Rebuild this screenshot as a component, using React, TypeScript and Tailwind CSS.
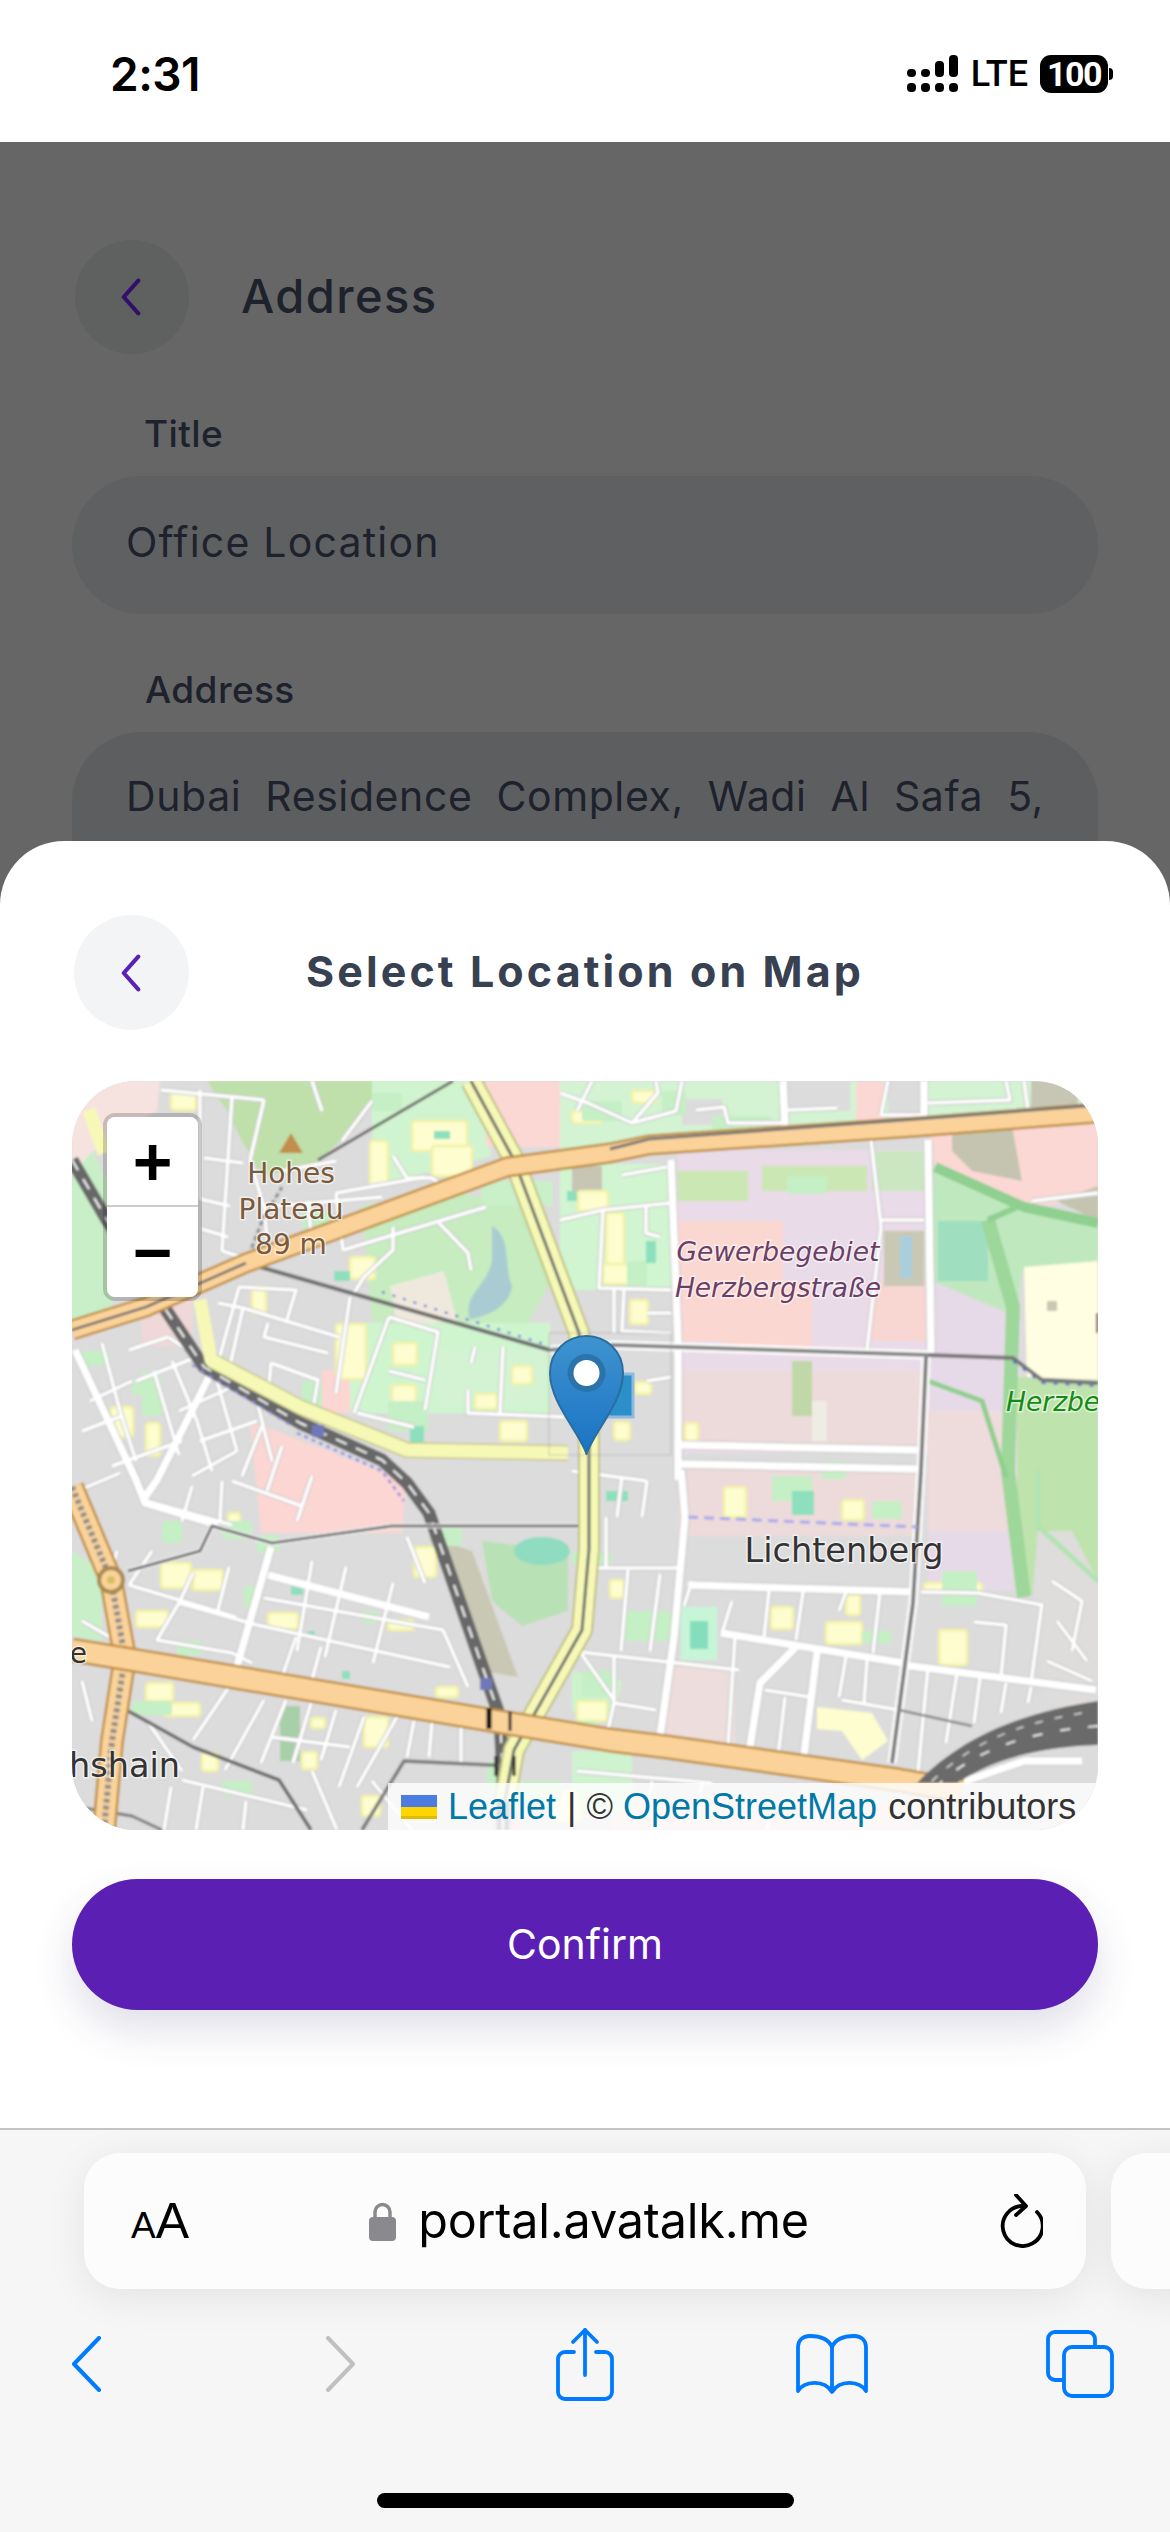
const sans = "font-['Inter','Noto_Sans',sans-serif]";

const thin = [
  "89,9 192,19", "128,9 128,118", "160,16 150,170", "192,19 178,79", "132,77 171,82", "128,118 158,125", "130,148 156,156", "150,170 176,178",
  "167,206 224,209 214,242", "146,222 171,227 157,289", "171,227 267,256", "196,242 192,256 256,272", "199,282 246,299 242,322", "199,282 196,316",
  "317,236 366,251 353,329", "317,236 282,332", "285,332 342,346", "317,290 353,299", "278,216 264,312", "396,309 396,332 492,336", "431,266 428,332", "403,266 399,282",
  "264,112 353,96", "192,126 310,116", "271,169 414,126", "367,142 396,172 399,189", "321,146 321,169 292,196 282,212", "321,75 335,97 360,97 367,102",
  "192,126 196,168", "236,120 240,165", "264,112 271,169", "178,79 192,126", "210,90 264,80", "270,60 300,20", "240,0 250,30",
  "57,269 96,256", "96,256 142,286", "167,206 146,282", "82,290 107,374", "64,300 140,270", "107,330 160,306", "18,320 60,300", "10,350 50,335", "128,360 185,340", "180,300 200,380",
  "40,385 110,360", "5,410 48,392", "71,419 160,444", "107,522 85,559 160,572 180,582", "121,492 107,522", "57,504 164,536", "157,486 146,529",
  "30,262 48,330 64,380", "100,280 125,340", "125,340 140,390", "145,300 165,370", "165,370 120,395", "190,345 170,395", "210,365 195,410", "160,400 230,425", "120,405 110,440", "240,395 225,440", "150,400 148,440",
  "192,517 371,549", "185,544 378,586", "107,522 185,544", "274,486 253,576", "321,502 301,582", "224,556 210,596", "249,566 239,602", "371,549 396,606", "335,456 353,502", "240,480 225,570",
  "157,606 121,659", "192,619 153,689", "214,619 189,682", "239,622 221,682", "264,629 249,679", "292,636 267,706", "325,636 285,706", "342,640 335,676", "360,640 357,676", "389,646 389,682",
  "199,656 278,666", "110,699 235,729", "99,706 92,749", "131,706 124,749", "174,720 171,749", "45,470 40,490", "10,540 45,560", "10,600 20,640", "57,504 80,470", "75,640 110,690", "300,700 340,749", "240,690 265,749",
  "534,436 534,486", "509,487 609,487", "508,571 667,589", "556,489 549,570", "588,493 578,570", "697,510 692,556", "731,511 724,559", "774,511 767,530", "808,511 801,572",
  "663,556 656,666", "713,616 706,676", "774,576 767,616", "795,579 792,622", "770,619 827,629", "693,609 738,616", "856,586 845,702", "885,592 874,662", "908,597 902,642", "934,602 929,632", "959,606 956,622",
  "902,541 934,544 929,596", "970,522 959,602", "906,512 970,524", "849,511 906,512", "542,622 536,649", "542,622 584,629", "508,571 542,619", "542,576 542,622",
  "531,129 527,207 599,209", "488,139 531,129 599,122", "550,94 595,86", "574,126 574,152 588,156", "542,209 542,252", "552,209 550,250 599,252", "799,59 809,146 795,269", "809,139 852,139",
  "809,34 816,0", "809,34 852,34", "856,22 938,19 934,0", "952,0 956,29", "716,29 765,27", "716,42 656,42 652,26 624,29", "560,42 586,12 584,0", "488,12 516,22 560,42", "520,0 505,30",
  "610,0 604,30 560,42", "960,120 1026,112", "575,232 599,232", "575,300 599,296", "500,390 575,400", "550,395 545,436", "575,400 570,436", "660,520 650,552", "620,500 612,525",
  "505,690 560,695 640,702", "580,700 575,735", "630,702 625,740", "700,720 695,749", "980,500 1010,520 1000,570", "985,540 1015,580", "975,580 1020,600",
];

const mid = [
  "3,269 64,399 73,422 146,444", "142,286 85,399 71,419", "199,466 164,589", "196,494 357,536", "649,552 831,582", "724,566 688,602 677,672", "745,571 731,682",
  "711,0 713,46", "852,0 852,39", "856,59 859,272", "599,79 606,260 606,399", "609,389 613,436 602,556 588,656", "616,504 845,511", "609,364 845,369", "609,383 845,388", "831,584 1024,609", "888,702 952,680 1010,680",
];

const yellow = [
  [99, 12, 25, 17], [340, 40, 55, 30], [360, 65, 40, 30], [298, 60, 18, 45], [278, 176, 25, 22], [180, 205, 14, 28], [264, 243, 30, 55], [321, 262, 24, 22], [320, 304, 24, 20],
  [440, 285, 20, 18], [403, 313, 22, 15], [428, 340, 27, 20], [506, 110, 30, 20], [534, 132, 18, 55], [531, 183, 36, 20], [558, 219, 18, 24], [563, 301, 16, 12], [542, 341, 16, 18],
  [613, 342, 13, 18], [89, 482, 30, 25], [121, 489, 30, 20], [196, 532, 30, 16], [74, 602, 27, 18], [92, 622, 36, 13], [64, 530, 32, 16], [292, 636, 24, 30], [230, 671, 15, 17],
  [364, 606, 22, 10], [316, 539, 26, 10], [239, 637, 14, 10], [156, 432, 12, 10], [342, 466, 22, 30], [699, 526, 22, 22], [754, 541, 36, 22], [774, 514, 14, 20], [652, 406, 22, 30],
  [770, 419, 22, 20], [867, 549, 28, 35], [538, 499, 14, 18], [852, 502, 58, 8], [39, 326, 22, 30], [74, 342, 14, 33], [488, 300, 10, 20], [505, 620, 30, 20], [500, 30, 30, 12],
  [560, 10, 24, 12], [290, 715, 18, 20], [480, 710, 28, 30], [130, 672, 16, 18],
];

const green = [
  [316, 320, 40, 30], [90, 440, 20, 22], [70, 290, 20, 45], [185, 454, 22, 18], [172, 505, 14, 22], [290, 530, 16, 12], [360, 445, 30, 20], [150, 700, 30, 14], [60, 620, 40, 14],
  [415, 680, 20, 30], [510, 20, 40, 20], [590, 10, 24, 24], [640, 35, 60, 24], [500, 470, 40, 14], [550, 530, 50, 30], [510, 590, 35, 25], [495, 640, 30, 20], [440, 700, 50, 20],
  [750, 380, 24, 18], [800, 420, 30, 18], [700, 395, 40, 25], [870, 490, 35, 35], [790, 550, 30, 12], [715, 95, 40, 18], [300, 12, 30, 18], [8, 270, 30, 15], [416, 25, 10, 14],
  [230, 300, 20, 25], [60, 300, 14, 14], [150, 440, 30, 18], [230, 130, 30, 18], [105, 560, 25, 14], [555, 180, 20, 25],
];

const teal = [
  [362, 50, 16, 8], [262, 190, 16, 10], [219, 500, 12, 14], [235, 550, 8, 8], [270, 590, 8, 8], [534, 410, 22, 10], [720, 410, 22, 24], [574, 160, 10, 22], [495, 110, 10, 10], [338, 345, 14, 20],
];

function MapArt() {
  return (
    <svg viewBox="0 0 1026 749" className="absolute inset-0 w-full h-full">
      <defs>
        <filter id="soft" x="0" y="0" width="100%" height="100%">
          <feGaussianBlur stdDeviation="0.8" />
        </filter>
      </defs>
      <g filter="url(#soft)">
        <rect width="1026" height="749" fill="#dddcdc" />
        {/* land use */}
        <polygon points="0,0 88,0 85,30 30,60 0,100" fill="#f6e3e0" />
        <polygon points="0,95 20,70 40,110 40,232 0,240" fill="#c9efc9" />
        <polygon points="135,0 307,0 290,40 240,85 190,95 170,60 155,30" fill="#bfe0aa" />
        <polygon points="290,125 370,110 470,125 478,200 455,245 400,255 300,240" fill="#c6ecc0" />
        <polygon points="318,205 372,190 385,240 325,245" fill="#efe9dd" />
        <path d="M420 145 C440 155 432 190 440 205 C438 225 415 236 398 238 C390 215 415 205 420 180 Z" fill="#a9ccd2" />
        <rect x="300" y="0" width="110" height="60" fill="#d0f4cf" />
        <polygon points="300,60 410,40 420,75 300,105" fill="#d0f4cf" />
        <rect x="414" y="0" width="82" height="66" fill="#fbd8d4" />
        <polygon points="488,0 1026,0 1026,30 845,45 577,60 488,75" fill="#d3f3d3" />
        <rect x="610" y="18" width="40" height="26" fill="#dcdcdc" />
        <rect x="716" y="0" width="62" height="30" fill="#dcdcdc" />
        <rect x="784" y="0" width="28" height="42" fill="#fbd8d4" />
        <rect x="816" y="0" width="34" height="34" fill="#dcdcdc" />
        <rect x="959" y="0" width="47" height="26" fill="#c7c6b4" />
        <polygon points="178,340 335,400 330,452 189,452" fill="#fbd6d2" />
        <rect x="250" y="289" width="35" height="43" fill="#fbd6d2" />
        <rect x="278" y="242" width="200" height="90" fill="#cff5cf" />
        <rect x="364" y="270" width="110" height="55" fill="#d3f3d3" />
        <rect x="70" y="215" width="50" height="50" fill="#f0d8d8" />
        <rect x="410" y="100" width="70" height="25" fill="#c9f0c9" />
        <rect x="488" y="83" width="111" height="126" fill="#d0f5d0" />
        <rect x="500" y="85" width="30" height="25" fill="#c7c6b4" />
        <rect x="606" y="69" width="254" height="303" fill="#e9dbe8" />
        <rect x="606" y="140" width="105" height="120" fill="#fbd7d2" />
        <rect x="650" y="200" width="90" height="70" fill="#fbd7d2" />
        <rect x="606" y="90" width="70" height="30" fill="#cbe7b3" />
        <rect x="690" y="85" width="105" height="25" fill="#cbe7b3" />
        <rect x="800" y="200" width="55" height="60" fill="#f8d6d2" />
        <rect x="812" y="150" width="40" height="55" fill="#c9c8b4" />
        <rect x="828" y="155" width="12" height="42" fill="#a9cfdc" />
        <rect x="800" y="70" width="55" height="40" fill="#cbe7c2" />
        <rect x="606" y="290" width="250" height="75" fill="#eddada" />
        <rect x="720" y="280" width="20" height="55" fill="#c0d8a8" />
        <rect x="740" y="320" width="15" height="40" fill="#efece4" />
        <rect x="606" y="385" width="245" height="70" fill="#eddada" />
        <polygon points="856,45 1026,30 1026,120 960,125 863,90" fill="#fbd8d4" />
        <polygon points="880,50 940,45 950,100 900,90 880,70" fill="#c5c4b0" />
        <polygon points="985,120 1026,105 1026,140" fill="#c5c4b0" />
        <polygon points="860,200 950,240 945,400 940,509 856,509" fill="#e7dae8" />
        <rect x="856" y="330" width="85" height="120" fill="#eedbdb" />
        <polygon points="860,90 950,125 1026,140 1026,190 950,190 945,235 860,200" fill="#bfe8bf" />
        <rect x="866" y="140" width="50" height="60" fill="#9fdfc0" />
        <polygon points="952,186 1026,180 1026,299 955,296" fill="#fffde2" />
        <rect x="975" y="220" width="10" height="10" fill="#c9c8b4" />
        <polygon points="945,296 1026,299 1026,560 1000,640 970,520 945,505" fill="#bfe3ad" />
        <polygon points="966,450 1000,450 1026,500 1026,632 975,622 960,520" fill="#dedddc" />
        <polygon points="357,456 400,470 446,596 410,590" fill="#c9c8b4" />
        <polygon points="410,460 496,470 496,530 450,545 420,520" fill="#b9e1b6" />
        <ellipse cx="470" cy="470" rx="28" ry="14" fill="#8fdcc0" />
        <rect x="595" y="586" width="68" height="76" fill="#eedddd" />
        <rect x="609" y="526" width="36" height="53" fill="#c7f5d8" />
        <rect x="618" y="540" width="18" height="28" fill="#85debb" />
        <rect x="208" y="625" width="20" height="55" fill="#a7cfa8" />
        <polygon points="745,626 800,632 816,660 790,679 770,650 745,648" fill="#fdfdcf" />
        <polygon points="0,470 30,490 30,560 0,555" fill="#c9efc9" />
        <polygon points="500,590 550,600 540,640 500,630" fill="#cdf3cd" />
        <rect x="420" y="730" width="30" height="20" fill="#f3cccc" />
        <rect x="540" y="720" width="300" height="30" fill="#eddcdc" />
        <rect x="500" y="670" width="60" height="60" fill="#cff3cf" />
        {yellow.map(([x, y, w, h], i) => (
          <rect key={i} x={x} y={y} width={w} height={h} rx="3" fill="#fdfdd0" stroke="#f2f2a4" strokeWidth="2.5" />
        ))}
        {green.map(([x, y, w, h], i) => (
          <rect key={i} x={x} y={y} width={w} height={h} rx="3" fill="#c5efc5" />
        ))}
        {teal.map(([x, y, w, h], i) => (
          <rect key={i} x={x} y={y} width={w} height={h} fill="#8ddfbd" />
        ))}
        {/* streets, grey casing first */}
        <g fill="none" stroke="#c6c6c6" strokeLinejoin="round">
          {thin.map((p) => (
            <polyline key={p} points={p} strokeWidth="5.5" />
          ))}
          {mid.map((p) => (
            <polyline key={p} points={p} strokeWidth="9.5" />
          ))}
        </g>
        <g fill="none" stroke="#ffffff" strokeLinejoin="round">
          {thin.map((p) => (
            <polyline key={p} points={p} strokeWidth="3.5" />
          ))}
          {mid.map((p) => (
            <polyline key={p} points={p} strokeWidth="7.5" />
          ))}
        </g>
        {/* dark green edges of the Herzberge park */}
        <g fill="none" stroke="#8fcf8f" strokeLinejoin="round">
          <polyline points="863,86 952,126 1026,142" strokeWidth="10" />
          <polyline points="916,139 941,226 936,390 952,516" strokeWidth="14" stroke="#9ed79a" />
          <polyline points="856,300 910,320 934,396" strokeWidth="5" />
          <polyline points="945,126 916,139" strokeWidth="6" />
          <polyline points="966,389 966,445 1026,500" strokeWidth="5" stroke="#b0e4b0" />
        </g>
        {/* rail */}
        <g fill="none" strokeLinejoin="round">
          <polyline points="174,182 190,140 210,106" stroke="#8b8b8b" strokeWidth="3" strokeDasharray="5 3" />
          <polyline points="246,79 381,0" stroke="#6d6d6d" strokeWidth="3" />
          <polyline points="174,182 478,269" stroke="#6f6f6f" strokeWidth="4" />
          <polyline points="310,215 478,269" stroke="#5566dd" strokeWidth="2" strokeDasharray="3 8" transform="translate(0 -4)" />
          <polyline points="478,269 542,264 856,274" stroke="#ffffff" strokeWidth="9" />
          <polyline points="478,269 542,264 856,274" stroke="#858585" strokeWidth="4" />
          <polyline points="856,274 941,277 970,299 1026,302" stroke="#777777" strokeWidth="4" />
          <polyline points="941,280 970,302 1026,305" stroke="#5566cc" strokeWidth="2" strokeDasharray="4 8" />
          <polyline points="854,276 849,389 841,522 827,629 820,682" stroke="#ffffff" strokeWidth="9" />
          <polyline points="854,276 849,389 841,522 827,629 820,682" stroke="#7d7d7d" strokeWidth="4" />
          <polyline points="827,629 900,645" stroke="#8a8a8a" strokeWidth="2.5" />
          <polyline points="0,79 35,139 92,226 132,286 228,342 310,379 335,402 357,432 407,576 428,636 431,699 431,749" stroke="#686868" strokeWidth="13" />
          <polyline points="0,79 35,139 92,226 132,286 228,342 310,379 335,402 357,432 407,576 428,636 431,699 431,749" stroke="#f4f4f4" strokeWidth="2" strokeDasharray="12 10" />
          <polyline points="225,352 310,390 332,420" stroke="#8a8ae8" strokeWidth="2.5" strokeDasharray="4 4" />
          <polyline points="120,284 220,345" stroke="#8a8ae8" strokeWidth="2" strokeDasharray="4 6" />
          <polyline points="616,436 845,446" stroke="#a9a9ef" strokeWidth="3" strokeDasharray="10 6" />
          <polyline points="56,490 128,470 140,445 200,462 320,445 510,445 518,430" stroke="#ffffff" strokeWidth="5" />
          <polyline points="56,490 128,470 140,445 200,462 320,445 510,445 518,430" stroke="#747474" strokeWidth="3" />
          <polyline points="49,626 121,666 207,699 239,749" stroke="#6c6c6c" strokeWidth="3.5" />
          <polyline points="290,749 332,680 440,685" stroke="#7c7c7c" strokeWidth="3.5" />
          <polyline points="0,725 60,735 90,749" stroke="#7c7c7c" strokeWidth="3" />
        </g>
        {/* yellow roads */}
        <g fill="none" strokeLinejoin="round">
          <polyline points="139,279 228,326 335,369 496,372" stroke="#c5c78c" strokeWidth="16" />
          <polyline points="128,219 139,279 228,326 335,369 496,372" stroke="#f6f9b6" strokeWidth="13" />
          <polyline points="17,29 32,72" stroke="#f6f9b6" strokeWidth="13" />
          <polyline points="399,0 442,79 507,252 517,355 517,468 510,549 442,669 433,720" stroke="#bebf80" strokeWidth="22" />
          <polyline points="399,0 442,79 507,252 517,355 517,468 510,549 442,669 433,720" stroke="#f6f9b6" strokeWidth="18" />
          <polyline points="399,0 442,79 507,252 517,355 517,468 510,549 442,669 433,720" stroke="#6d6d6d" strokeWidth="3" />
        </g>
        {/* orange roads */}
        <g fill="none" strokeLinejoin="round">
          <polyline points="0,406 39,499 53,576 40,660 32,749" stroke="#c08f3f" strokeWidth="24" />
          <polyline points="0,406 39,499 53,576 40,660 32,749" stroke="#fbd39a" strokeWidth="19" />
          <polyline points="0,406 39,499 53,576 40,660 32,749" stroke="#8d8d8d" strokeWidth="6" strokeDasharray="4 3" />
          <circle cx="39" cy="499" r="12" fill="#fbd39a" stroke="#a98a50" strokeWidth="4" />
          <circle cx="39" cy="499" r="4" fill="#d5c060" />
          <polyline points="0,569 49,577 417,639 538,659 595,666 827,699 890,710" stroke="#c08f3f" strokeWidth="25" />
          <polyline points="0,569 49,577 417,639 538,659 595,666 827,699 890,710" stroke="#fbd39a" strokeWidth="20" />
          <polyline points="0,249 74,226 174,182 435,86 538,72 577,64 845,46 1026,32" stroke="#c08f3f" strokeWidth="21" />
          <polyline points="0,249 74,226 174,182 435,86 538,72 577,64 845,46 1026,32" stroke="#fbd39a" strokeWidth="16" />
          <polyline points="0,249 74,226 174,182" stroke="#6f6f6f" strokeWidth="2.5" />
          <polyline points="538,68 577,58 845,38 1026,24" stroke="#777777" strokeWidth="3" />
          <polyline points="417,627 417,648" stroke="#111111" strokeWidth="5" />
          <polyline points="438,630 438,650" stroke="#333333" strokeWidth="3" />
          <polyline points="424,675 424,695" stroke="#222222" strokeWidth="3" />
          <polyline points="442,675 442,695" stroke="#222222" strokeWidth="3" />
        </g>
        {/* motorway */}
        <path d="M1026 620 C960 630 895 650 845 702 L885 702 C925 676 970 666 1026 664 Z" fill="#6a6a6a" />
        <path d="M1026 645 C960 650 905 668 868 702" fill="none" stroke="#e8e8e8" strokeWidth="2" strokeDasharray="10 18" />
        <path d="M1010 632 C950 642 900 660 858 702" fill="none" stroke="#d8d8d8" strokeWidth="1.5" strokeDasharray="8 12" />
        {/* peak and stations */}
        <polygon points="219,52 231,72 207,72" fill="#c18f4c" />
        <rect x="240" y="344" width="12" height="12" fill="#7078b8" />
        <rect x="408" y="597" width="12" height="12" fill="#7078b8" />
        <rect x="1024" y="232" width="2" height="20" fill="#6d4c2d" />
        {/* tile seam */}
        <rect x="477" y="252" width="122" height="122" fill="none" stroke="#9a9a9a" strokeOpacity="0.6" strokeWidth="0.8" />
      </g>
      <g fontFamily="'DejaVu Sans',sans-serif" paintOrder="stroke" stroke="#ffffff" strokeOpacity="0.55" strokeWidth="3">
        <g fill="#7b5a3c" fontSize="28" textAnchor="middle">
          <text x="219" y="102">Hohes</text>
          <text x="219" y="138">Plateau</text>
          <text x="219" y="173">89 m</text>
        </g>
        <g fill="#6b3f66" fontSize="26.5" fontStyle="italic" textAnchor="middle">
          <text x="706" y="180">Gewerbegebiet</text>
          <text x="706" y="216">Herzbergstraße</text>
        </g>
        <text x="772" y="481" fill="#333333" fontSize="33.5" textAnchor="middle">Lichtenberg</text>
        <text x="108" y="696" fill="#333333" fontSize="33.5" textAnchor="end">Friedrichshain</text>
        <text x="15" y="582" fill="#333333" fontSize="28" textAnchor="end">e</text>
        <text x="934" y="330" fill="#148c14" fontSize="26.5" fontStyle="italic">Herzberge</text>
      </g>
      {/* marker shadow box */}
      <rect x="536" y="293" width="25" height="43" fill="#2b8fca" stroke="#8db9dd" strokeWidth="3" />
    </svg>
  );
}

function Pin() {
  return (
    <svg viewBox="0 0 75 120" className="absolute left-[477px] top-[254px] w-[75px] h-[120px]">
      <defs>
        <linearGradient id="pin" x1="0" y1="0" x2="0" y2="1">
          <stop offset="0" stopColor="#3f93cf" />
          <stop offset="1" stopColor="#1a73c4" />
        </linearGradient>
      </defs>
      <path d="M37.5 119 C31 98 1 68 1 38 C1 16 18 1 37.5 1 C57 1 74 16 74 38 C74 68 44 98 37.5 119 Z" fill="url(#pin)" stroke="#2a6d9e" strokeWidth="2" />
      <circle cx="37.5" cy="38" r="19" fill="#2b74ab" />
      <circle cx="37.5" cy="38" r="13" fill="#ffffff" />
    </svg>
  );
}

function Chevron({ className }: { className: string }) {
  return (
    <svg viewBox="0 0 22 40" className={className} fill="none" stroke="currentColor" strokeWidth="4.5" strokeLinecap="round" strokeLinejoin="round">
      <path d="M19 2 L3 20 L19 38" />
    </svg>
  );
}

function StatusBar() {
  const cols = [
    [[0, 14, 8], [0, 28, 9]],
    [[14, 14, 8], [14, 28, 9]],
    [[28, 6, 16], [28, 28, 9]],
    [[42, 0, 22], [42, 28, 9]],
  ];
  return (
    <div className={`h-[142px] shrink-0 bg-white flex items-center justify-between pl-[110px] pr-[57px] pt-[5px] ${sans}`}>
      <span className="text-[46px] leading-none font-semibold text-black tracking-[-0.5px]">2:31</span>
      <div className="flex items-center">
        <svg viewBox="0 0 51 37" className="w-[51px] h-[37px]">
          {cols.flat().map(([x, y, h], i) => (
            <rect key={i} x={x} y={y} width="9" height={h} rx="4" fill="#000000" />
          ))}
        </svg>
        <span className="ml-[13px] text-[36px] leading-none font-medium text-black font-['Roboto',sans-serif]">LTE</span>
        <div className="ml-[12px] w-[68px] h-[38px] rounded-[11px] bg-black flex items-center justify-center">
          <span className="text-[34px] leading-none font-bold text-white tracking-[-1.5px] font-['Roboto',sans-serif]">100</span>
        </div>
        <div className="ml-[1px] w-[4px] h-[12px] rounded-r-full bg-black" />
      </div>
    </div>
  );
}

function AddressForm() {
  return (
    <div className={`px-[72px] pt-[98px] text-[#1e222c] ${sans}`}>
      <div className="flex items-center">
        <div className="w-[114px] h-[114px] ml-[3px] rounded-full bg-[#5f6060] flex items-center justify-center">
          <Chevron className="w-[20px] h-[40px] text-[#30106a] mr-[2px]" />
        </div>
        <h1 className="ml-[52px] pb-[3px] text-[47px] leading-none font-medium tracking-[1.4px]">Address</h1>
      </div>
      <label className="block mt-[58px] ml-[72px] text-[37px] leading-[44px] font-medium tracking-[0.4px]">Title</label>
      <div className="mt-[20px] h-[138px] rounded-full bg-[#5f6061] flex items-center pl-[54px] pb-[5px] text-[41px] tracking-[1.2px]">Office Location</div>
      <label className="block mt-[54px] ml-[73px] text-[37px] leading-[44px] font-medium tracking-[0.4px]">Address</label>
      <div className="mt-[20px] h-[300px] rounded-[70px] bg-[#5d5e60] pl-[54px] pr-[54px] pt-[39px] text-[41px] leading-[50px] tracking-[0.6px] [text-align-last:justify]">
        Dubai Residence Complex, Wadi Al Safa 5,
      </div>
    </div>
  );
}

function LocationSheet() {
  return (
    <div className={`absolute left-0 right-0 bottom-0 h-[1287px] rounded-t-[64px] bg-white px-[72px] pt-[74px] overflow-hidden ${sans}`}>
      <div className="grid grid-cols-[115px_1fr_115px] items-center">
        <div className="w-[115px] h-[115px] ml-[2px] rounded-full bg-[#f3f4f6] flex items-center justify-center">
          <Chevron className="w-[20px] h-[40px] text-[#5b21b6] mr-[2px]" />
        </div>
        <h2 className="text-center pb-[2px] text-[43px] leading-none font-bold text-[#374151] tracking-[3.1px] whitespace-nowrap">Select Location on Map</h2>
        <div />
      </div>
      <div className="relative mt-[51px] h-[749px] rounded-[64px] overflow-hidden bg-[#dddcdc]">
        <MapArt />
        <Pin />
        <div className="absolute left-[31px] top-[32px] w-[99px] rounded-[12px] border-[4px] border-[#0000002e] bg-clip-padding">
          <div className="h-[90px] rounded-t-[8px] bg-white border-b-[2px] border-[#cccccc] flex items-center justify-center text-[68px] leading-none font-bold text-black font-['Liberation_Sans',sans-serif]">+</div>
          <div className="h-[90px] rounded-b-[8px] bg-white flex items-center justify-center text-[68px] leading-none font-bold text-black font-['Liberation_Sans',sans-serif]">−</div>
        </div>
        <div className="absolute right-0 bottom-0 w-[710px] h-[47px] bg-[#ffffffcc] flex items-center pl-[13px] text-[36px] leading-none text-[#333333] whitespace-nowrap overflow-hidden font-['Liberation_Sans',sans-serif]">
          <svg viewBox="0 0 36 24" className="w-[36px] h-[24px] shrink-0">
            <rect width="36" height="12" fill="#4c7be1" />
            <rect y="12" width="36" height="9" fill="#ffd500" />
            <rect y="21" width="36" height="3" fill="#e0bc00" />
          </svg>
          <span className="ml-[11px] text-[#0078a8]">Leaflet</span>
          <span className="ml-[11px]">|</span>
          <span className="ml-[10px]">©</span>
          <span className="ml-[10px] text-[#0078a8]">OpenStreetMap</span>
          <span className="ml-[11px]">contributors</span>
        </div>
      </div>
      <button className="mt-[49px] w-full h-[131px] rounded-full bg-[#5b1fb3] text-white text-[41px] leading-none shadow-[0_20px_40px_rgba(60,60,120,0.16)]">Confirm</button>
    </div>
  );
}

function SafariBar() {
  return (
    <div className={`relative h-[404px] shrink-0 bg-[#f6f6f6] border-t-[2px] border-[#c4c4c4] overflow-hidden ${sans}`}>
      <div className="flex items-center pt-[23px]">
        <div className="ml-[84px] w-[1002px] h-[136px] shrink-0 rounded-[36px] bg-[#fcfcfc] shadow-[0_8px_40px_rgba(0,0,0,0.08)] flex items-center pl-[47px] pr-[43px]">
          <div className="flex items-baseline w-[58px] text-black font-['Liberation_Sans',sans-serif]">
            <span className="text-[37px] leading-none">A</span>
            <span className="text-[50px] leading-none">A</span>
          </div>
          <div className="flex-1 flex items-center justify-center pr-[10px]">
            <svg viewBox="0 0 27 40" className="w-[27px] h-[40px] mr-[22px]">
              <path d="M6 19 V11 a7.5 7.5 0 0 1 15 0 V19" fill="none" stroke="#8a8a8e" strokeWidth="3.5" />
              <rect x="0" y="16" width="27" height="24" rx="4" fill="#8a8a8e" />
            </svg>
            <span className="text-[48.5px] leading-none text-black tracking-[-0.2px]">portal.avatalk.me</span>
          </div>
          <svg viewBox="0 0 44 54" className="w-[44px] h-[54px]" fill="none" stroke="#000000" strokeWidth="3.8" strokeLinecap="round" strokeLinejoin="round">
            <path d="M24 12 A20 20 0 1 0 38 18" />
            <path d="M17 1 L27 12 L17 21" />
          </svg>
        </div>
        <div className="ml-[25px] w-[200px] h-[136px] shrink-0 rounded-[36px] bg-[#fcfcfc] shadow-[0_8px_40px_rgba(0,0,0,0.08)]" />
      </div>
      <div className="mt-[38px] flex items-center justify-between pl-[56px] pr-[60px] text-[#007aff]">
        <div className="w-[60px] flex justify-center">
          <svg viewBox="0 0 31 56" className="w-[31px] h-[56px] shrink-0" fill="none" stroke="currentColor" strokeWidth="4" strokeLinecap="round" strokeLinejoin="round">
            <path d="M28 2 L3 28 L28 54" />
          </svg>
        </div>
        <div className="w-[60px] flex justify-center pl-[11px] text-[#c0c0c0]">
          <svg viewBox="0 0 31 56" className="w-[31px] h-[56px] shrink-0" fill="none" stroke="currentColor" strokeWidth="4" strokeLinecap="round" strokeLinejoin="round">
            <path d="M3 2 L28 28 L3 54" />
          </svg>
        </div>
        <div className="w-[60px] flex justify-center pl-[4px]">
          <svg viewBox="0 0 58 74" className="w-[58px] h-[74px] shrink-0" fill="none" stroke="currentColor" strokeWidth="3.8" strokeLinecap="round" strokeLinejoin="round">
            <path d="M18 25 H9 a7 7 0 0 0 -7 7 V65 a7 7 0 0 0 7 7 H49 a7 7 0 0 0 7 -7 V32 a7 7 0 0 0 -7 -7 H40" />
            <path d="M29 48 V3" />
            <path d="M17 15 L29 3 L41 15" />
          </svg>
        </div>
        <div className="w-[60px] flex justify-center">
          <svg viewBox="0 0 72 60" className="w-[72px] h-[60px] shrink-0" fill="none" stroke="currentColor" strokeWidth="3.8" strokeLinecap="round" strokeLinejoin="round">
            <path d="M36 13 C32 4 22 2 14 2 C6 2 2 7 2 13 V57 C8 47 28 45 36 58 C44 45 64 47 70 57 V13 C70 7 66 2 58 2 C50 2 40 4 36 13 Z" />
            <path d="M36 13 V56" />
          </svg>
        </div>
        <div className="w-[60px] flex justify-center">
          <svg viewBox="0 0 68 68" className="w-[68px] h-[68px] shrink-0" fill="none" stroke="currentColor" strokeWidth="3.8" strokeLinejoin="round">
            <path d="M17 50 H9 a7 7 0 0 1 -7 -7 V9 a7 7 0 0 1 7 -7 H42 a7 7 0 0 1 7 7 V17" />
            <rect x="18" y="17" width="48" height="49" rx="8" />
          </svg>
        </div>
      </div>
      <div className="absolute left-[377px] bottom-[24px] w-[417px] h-[15px] rounded-full bg-black" />
    </div>
  );
}

export default function App() {
  return (
    <div className="w-[1170px] h-[2532px] flex flex-col overflow-hidden bg-white">
      <StatusBar />
      <div className="relative flex-1 bg-[#666666] overflow-hidden">
        <AddressForm />
        <LocationSheet />
      </div>
      <SafariBar />
    </div>
  );
}
